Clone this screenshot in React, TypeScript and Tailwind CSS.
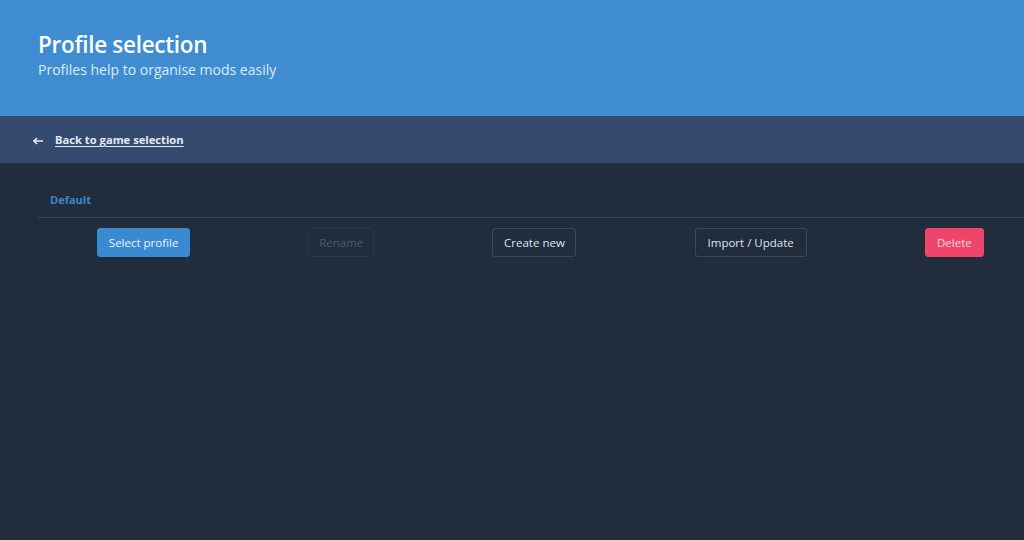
import React from 'react';

const buttons = [
  { label: 'Select profile', cls: 'w-[93px] bg-[#3a8ad2] border-[#3a8ad2] text-[#eaf3fb]' },
  { label: 'Rename', cls: 'w-[66px] border-[#2a3647] text-[#4e5b6b]' },
  { label: 'Create new', cls: 'w-[84px] border-[#3c4858] text-[#dde4ec]' },
  { label: 'Import / Update', cls: 'w-[112px] border-[#3c4858] text-[#dde4ec]' },
  { label: 'Delete', cls: 'w-[59px] bg-[#ef456a] border-[#ef456a] text-[#f9dde3]' },
];

export default function App() {
  return (
    <div className="w-[1024px] h-[540px] overflow-hidden bg-[#212c3c] font-['Open_Sans',sans-serif]">
      <div className="h-[116px] bg-[#3f8cd0] pl-[38px] pt-[30px]">
        <h1 className="text-[22.5px] leading-[30px] font-semibold text-white tracking-[-0.3px]">Profile selection</h1>
        <p className="text-[14px] leading-[19px] text-[#d9edfa]">Profiles help to organise mods easily</p>
      </div>
      <div className="h-[47px] bg-[#344a6f] flex items-center pl-[33px] pt-[2px]">
        <svg width="10" height="8" viewBox="0 0 10 8" className="mr-[12px]">
          <path d="M4 1 L1 4 L4 7 M1 4 H10" stroke="#e3eaf2" strokeWidth="1.6" fill="none" />
        </svg>
        <a className="text-[11.2px] font-bold text-[#e3eaf2] underline underline-offset-2">Back to game selection</a>
      </div>
      <div className="pl-[38px]">
        <div className="h-[55px] border-b border-[#364253] flex items-end pb-[9px] pl-[12px]">
          <span className="text-[11px] font-bold text-[#3d86c8]">Default</span>
        </div>
        <div className="w-[1005px] flex justify-around pt-[10px]">
          {buttons.map((b) => (
            <button
              key={b.label}
              className={`h-[29px] rounded-[3px] border text-[11.5px] flex items-center justify-center ${b.cls}`}
            >
              {b.label}
            </button>
          ))}
        </div>
      </div>
    </div>
  );
}
